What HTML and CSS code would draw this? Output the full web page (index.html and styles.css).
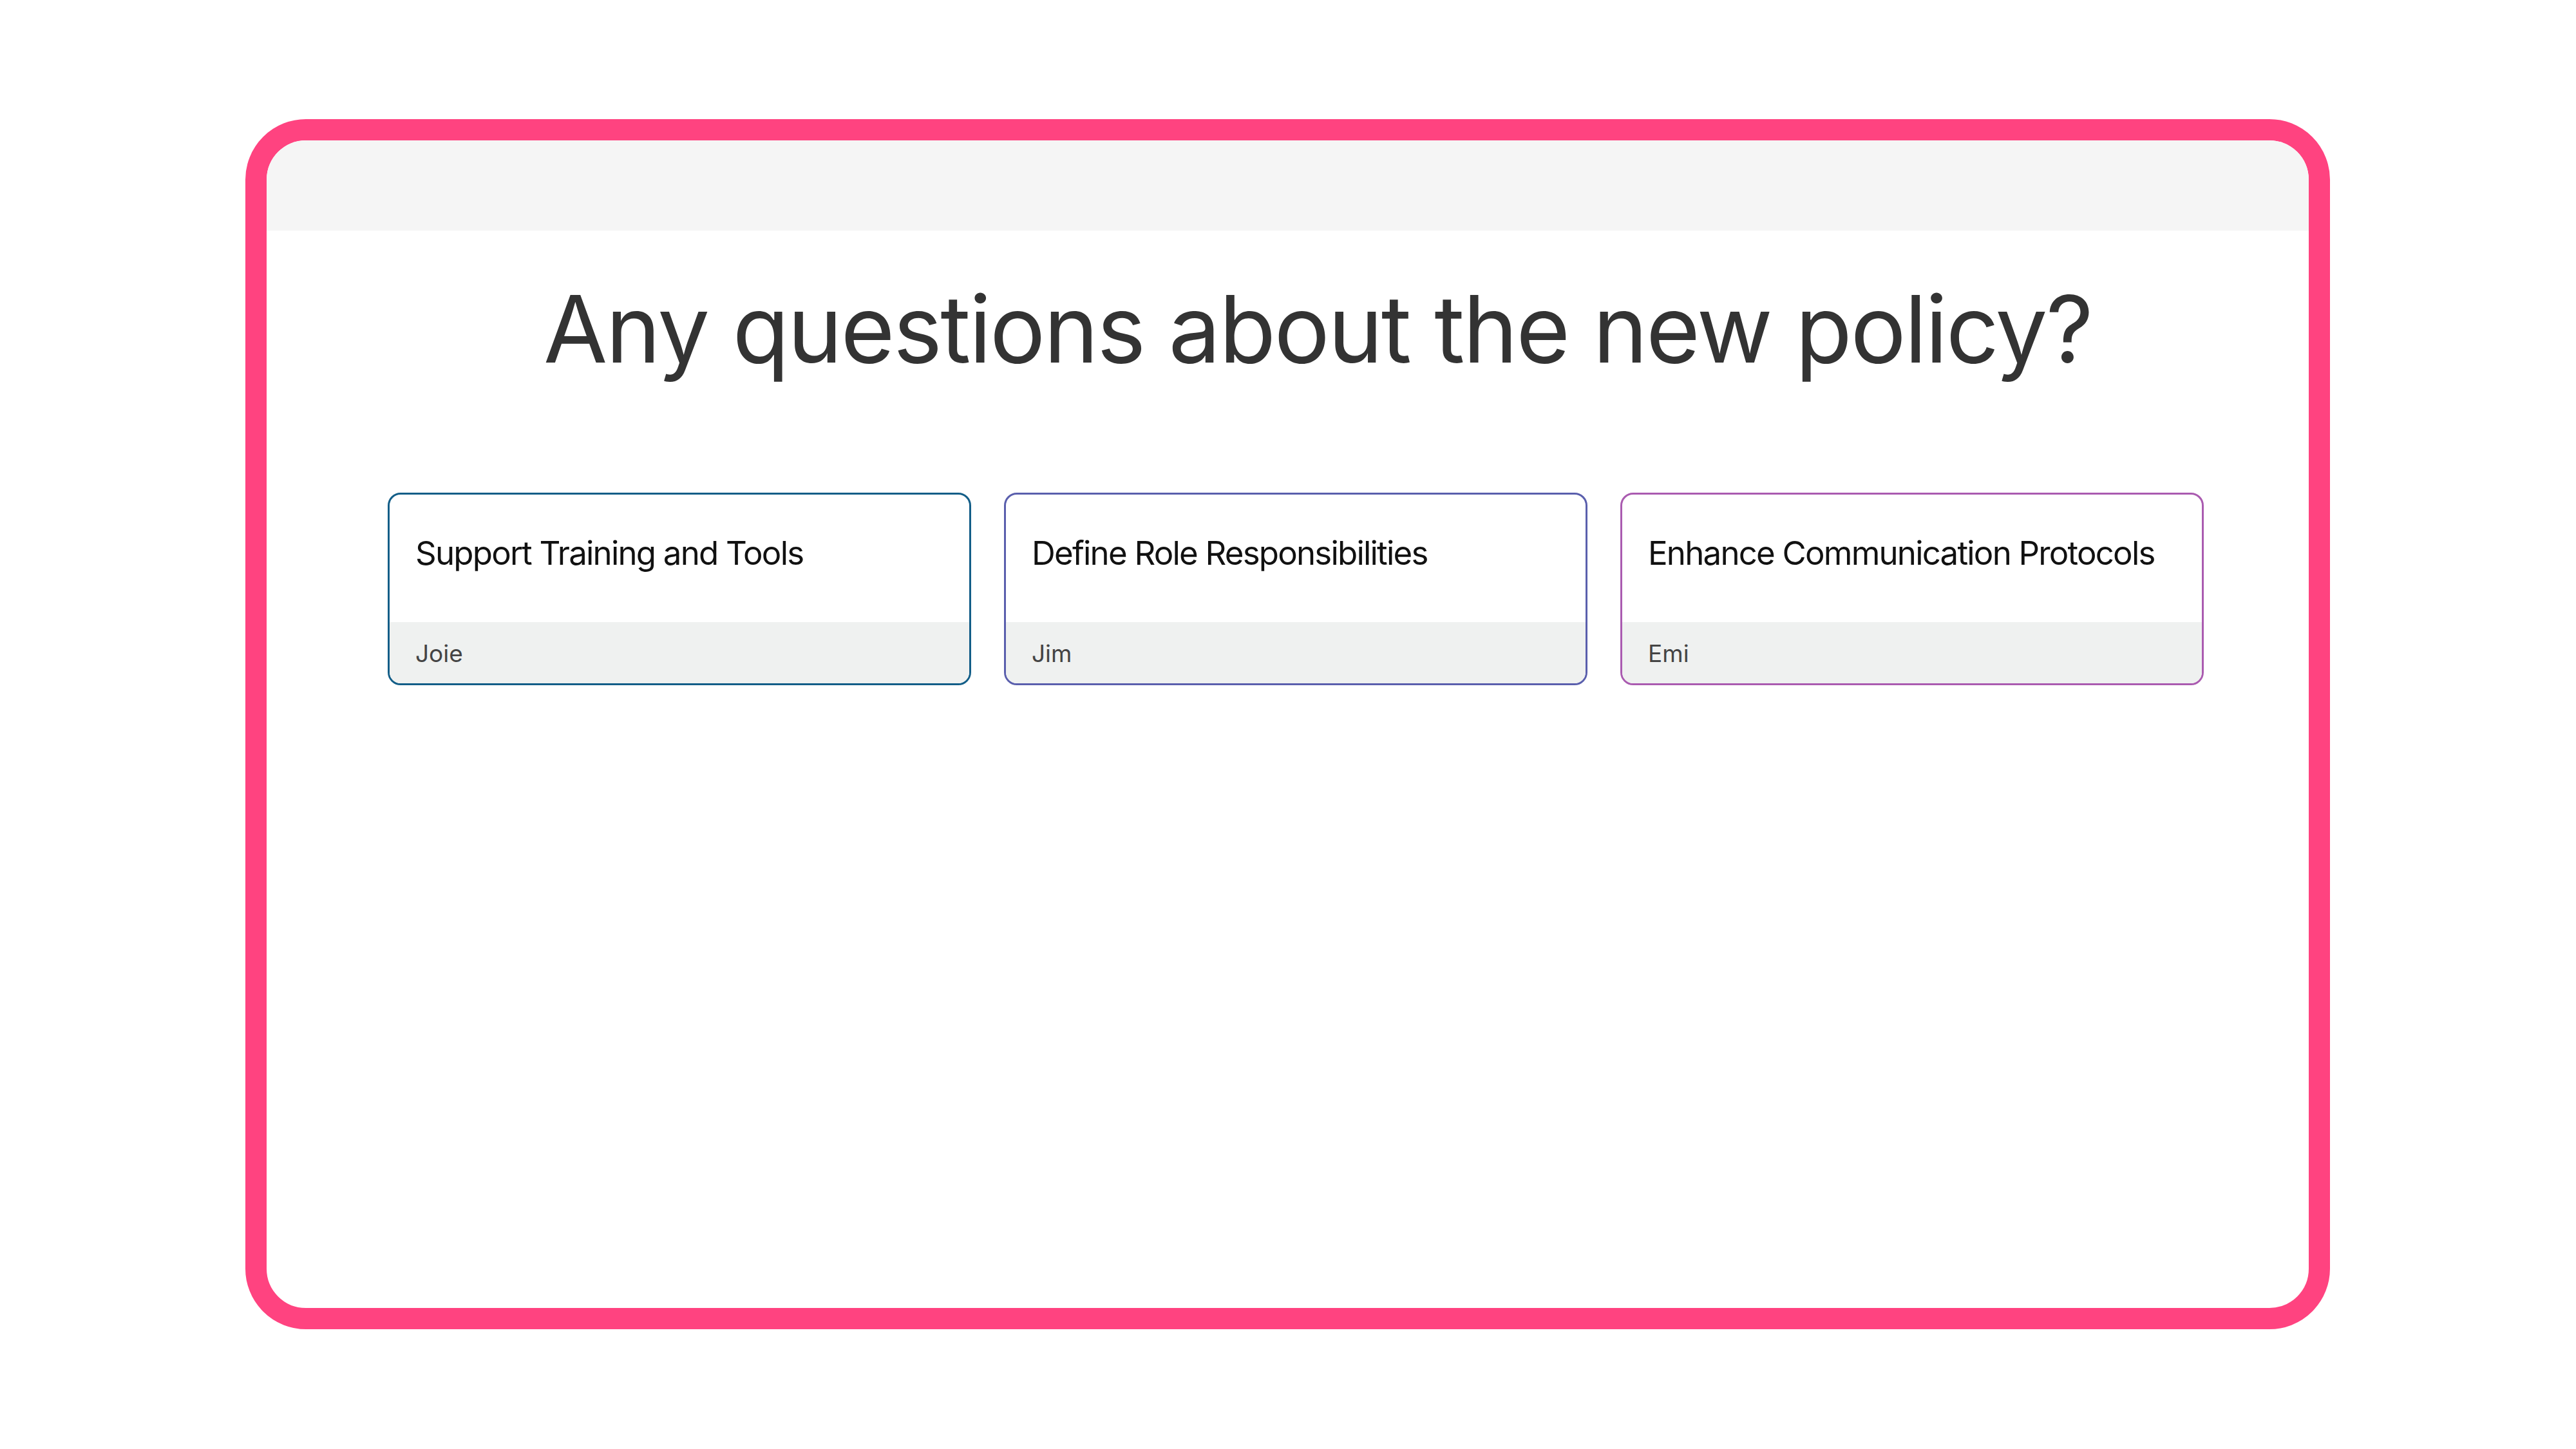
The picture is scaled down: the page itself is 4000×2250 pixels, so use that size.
FILE: index.html
```html
<!DOCTYPE html>
<html lang="en">
<head>
  <meta charset="UTF-8">
  <meta name="viewport" content="width=device-width, initial-scale=1.0">
  <title>Any questions about the new policy?</title>
  <link rel="stylesheet" href="styles.css">
</head>
<body>
  <div class="frame">
    <div class="topbar"></div>
    <h1 class="question">Any questions about the new policy?</h1>

    <div class="cards">
      <div class="card card-blue">
        <div class="card-title">Support Training and Tools</div>
        <div class="card-author">Joie</div>
      </div>
      <div class="card card-indigo">
        <div class="card-title">Define Role Responsibilities</div>
        <div class="card-author">Jim</div>
      </div>
      <div class="card card-orchid">
        <div class="card-title">Enhance Communication Protocols</div>
        <div class="card-author">Emi</div>
      </div>
    </div>
  </div>
</body>
</html>
```
FILE: styles.css
```css
* {
  box-sizing: border-box;
}
body {
  margin: 0;
  background-color: #fff;
  font-family: Inter, "Noto Sans", sans-serif;
  color: #333;
}
.frame {
  margin: 185px 0 0 381px;
  width: 3237px;
  height: 1879px;
  border: 33px solid #ff4380;
  border-radius: 94px;
  overflow: hidden;
  background-color: #fff;
}
.topbar {
  height: 140px;
  background-color: #f5f5f5;
}
.question {
  margin: 67px 0 0;
  padding-left: 93px;
  font-size: 144px;
  font-weight: 400;
  line-height: 1.2;
  letter-spacing: -2.6px;
  text-align: center;
  color: #333;
}
.cards {
  display: grid;
  grid-template-columns: repeat(3, 906px);
  gap: 51px;
  margin: 167px 0 0 188px;
}
.card {
  border: 3px solid #135e88;
  border-radius: 20px;
  overflow: hidden;
  background-color: #fff;
}
.card-indigo {
  border-color: #5a5fad;
}
.card-orchid {
  border-color: #aa5bb0;
}
.card-title {
  height: 198px;
  padding: 60px 40px 0;
  font-size: 51px;
  line-height: 1.2;
  letter-spacing: -1.8px;
  white-space: nowrap;
  color: #111;
}
.card-author {
  height: 95px;
  padding: 27px 40px 0;
  background-color: #eff1f0;
  font-size: 37px;
  line-height: 1.2;
  color: #444;
}
```
